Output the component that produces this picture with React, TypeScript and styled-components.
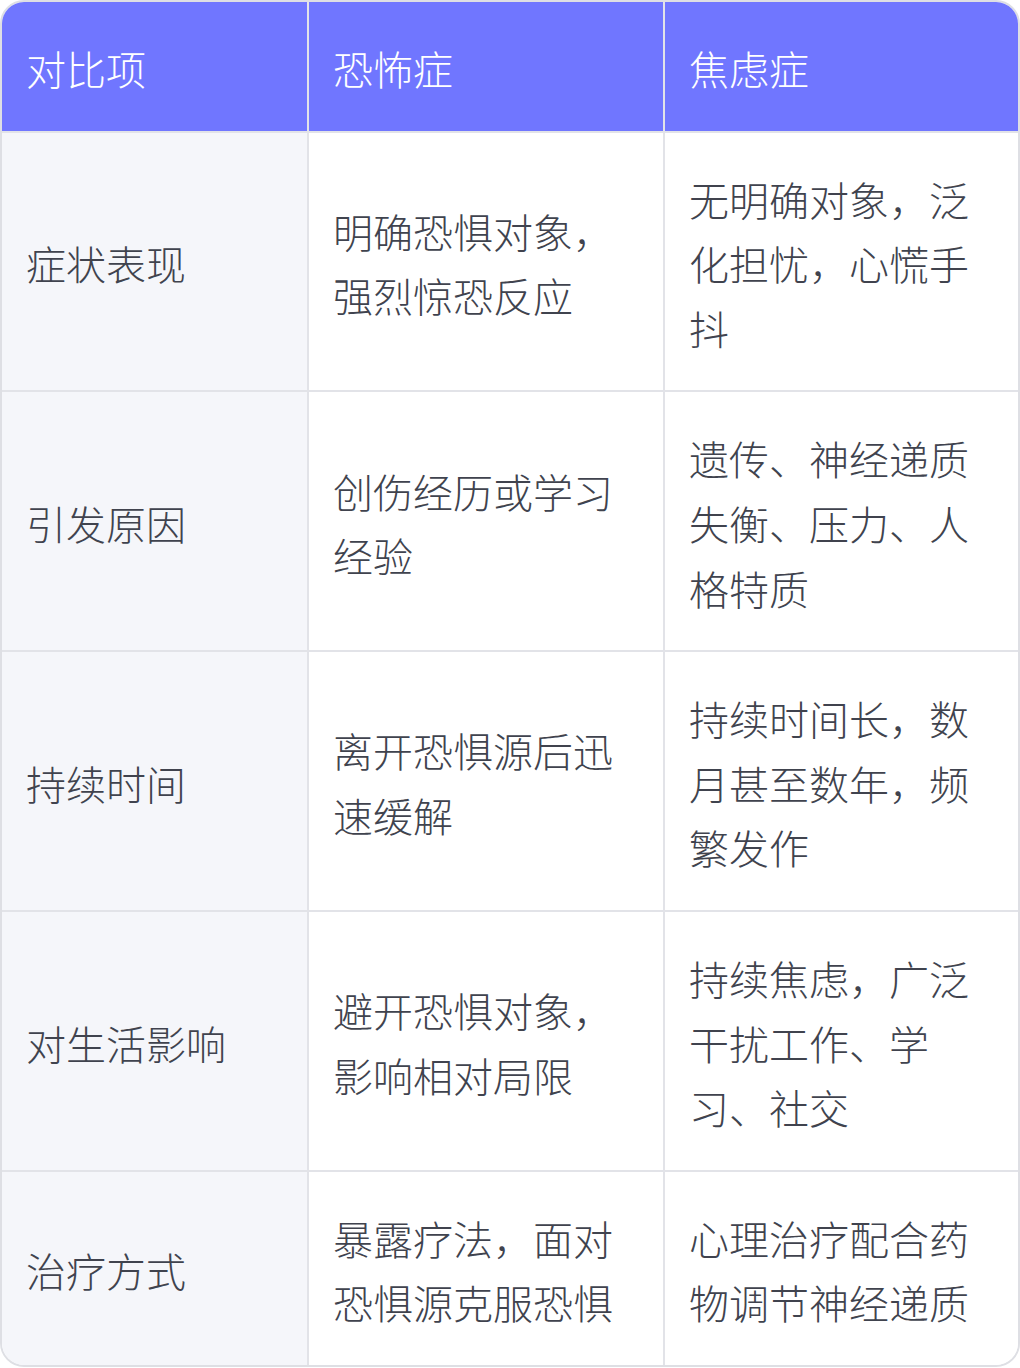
import React from "react";
import styled, { createGlobalStyle } from "styled-components";

const Global = createGlobalStyle`
  html, body { margin: 0; padding: 0; background: #ffffff; }
  body { font-family: "Noto Sans CJK SC", "Noto Sans", sans-serif; }
`;

const Table = styled.div`
  box-sizing: border-box;
  width: 1020px;
  border: 2px solid #dedfe4;
  border-radius: 24px;
  overflow: hidden;
  display: grid;
  grid-template-columns: 307px 356px 1fr;
  background: #ffffff;
`;

const Cell = styled.div<{ $head?: boolean; $first?: boolean; $last?: boolean; $bottom?: boolean }>`
  box-sizing: border-box;
  padding: 34px 24px 30px;
  display: flex;
  align-items: center;
  font-size: 40px;
  line-height: 64.6px;
  font-weight: 300;
  color: ${(p) => (p.$head ? "#ffffff" : "#40434e")};
  background: ${(p) => (p.$head ? "#7076ff" : p.$first ? "#f5f6fa" : "#ffffff")};
  border-right: ${(p) => (p.$last ? "none" : "2px solid #e2e3e8")};
  border-bottom: ${(p) => (p.$bottom ? "none" : "2px solid #e2e3e8")};
`;

const head = ["对比项", "恐怖症", "焦虑症"];
const rows: string[][] = [
  ["症状表现", "明确恐惧对象，强烈惊恐反应", "无明确对象，泛化担忧，心慌手抖"],
  ["引发原因", "创伤经历或学习经验", "遗传、神经递质失衡、压力、人格特质"],
  ["持续时间", "离开恐惧源后迅速缓解", "持续时间长，数月甚至数年，频繁发作"],
  ["对生活影响", "避开恐惧对象，影响相对局限", "持续焦虑，广泛干扰工作、学习、社交"],
  ["治疗方式", "暴露疗法，面对恐惧源克服恐惧", "心理治疗配合药物调节神经递质"],
];

export default function App() {
  return (
    <>
      <Global />
      <Table>
        {head.map((h, i) => (
          <Cell key={h} $head $last={i === 2}>
            {h}
          </Cell>
        ))}
        {rows.map((r, ri) =>
          r.map((c, ci) => (
            <Cell
              key={`${ri}-${ci}`}
              $first={ci === 0}
              $last={ci === 2}
              $bottom={ri === rows.length - 1}
            >
              {c}
            </Cell>
          ))
        )}
      </Table>
    </>
  );
}
